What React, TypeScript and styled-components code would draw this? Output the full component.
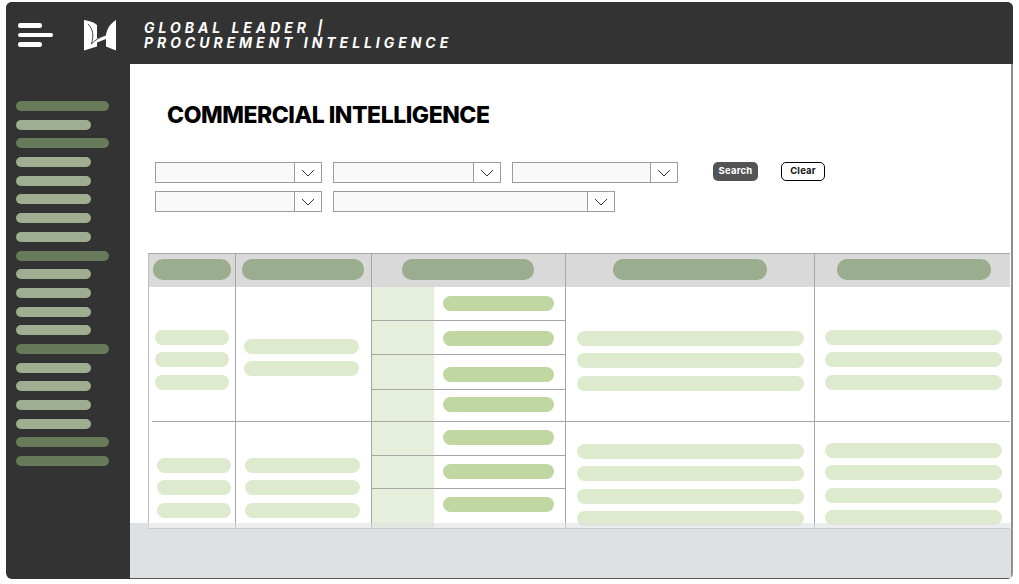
import React from "react";
import styled, { createGlobalStyle } from "styled-components";

const GlobalStyle = createGlobalStyle`
  html, body {
    margin: 0;
    padding: 0;
    background: #fff;
    font-family: "Inter", "Liberation Sans", sans-serif;
  }
  * {
    box-sizing: border-box;
  }
`;

const sideItems = [
  "dark", "light", "dark", "light", "light", "light", "light", "light",
  "dark", "light", "light", "light", "light", "dark", "light", "light",
  "light", "light", "dark", "dark",
];

const rowOneSubs = [
  { height: 34, top: 9 },
  { height: 34, top: 10 },
  { height: 35, top: 12 },
  { height: 31, top: 7 },
];

const rowTwoSubs = [
  { height: 34, top: 8 },
  { height: 33, top: 8 },
  { height: 39, top: 8 },
];

function Logo() {
  return (
    <svg width="32" height="31" viewBox="0 0 32 31">
      <path
        fill="#fff"
        d="M0 0 C5 1 10 2 13 5 L13 18.5 L22 15 C23 8 27 3 32 0 L32 30.5 L22 26.5 L22 19 L13 22.5 L13 26.5 L0 30.5 Z"
      />
      <path
        fill="none"
        stroke="#333"
        strokeWidth="0.9"
        d="M4 4 C9 9 10 15 7.5 24 C11 20 16 17 22 15"
      />
    </svg>
  );
}

function SelectBox({ width }: { width: number }) {
  return (
    <Select $width={width}>
      <SelectInput />
      <SelectArrow>
        <svg width="14" height="8" viewBox="0 0 14 8" fill="none" stroke="#333" strokeWidth="1">
          <path d="M1 1 L7 7 L13 1" />
        </svg>
      </SelectArrow>
    </Select>
  );
}

function Bars({ count, pad }: { count: number; pad: string }) {
  return (
    <BarStack $pad={pad}>
      {Array.from({ length: count }).map((_, i) => (
        <Bar key={i} />
      ))}
    </BarStack>
  );
}

function App() {
  return (
    <>
      <GlobalStyle />
      <Frame>
        <TopBar>
          <Burger>
            <BurgerLine $width={24} />
            <BurgerLine $width={35} />
            <BurgerLine $width={24} />
          </Burger>
          <LogoWrap>
            <Logo />
          </LogoWrap>
          <Tagline>
            GLOBAL LEADER |
            <br />
            PROCUREMENT INTELLIGENCE
          </Tagline>
        </TopBar>
        <Body>
          <Sidebar>
            {sideItems.map((kind, i) => (
              <SideItem key={i} $dark={kind === "dark"} />
            ))}
          </Sidebar>
          <Main>
            <Title>COMMERCIAL INTELLIGENCE</Title>
            <Filters>
              <FilterRow>
                <SelectBox width={167} />
                <SelectBox width={168} />
                <SelectBox width={166} />
                <SearchButton>Search</SearchButton>
                <ClearButton>Clear</ClearButton>
              </FilterRow>
              <FilterRow>
                <SelectBox width={167} />
                <SelectBox width={282} />
              </FilterRow>
            </Filters>
            <Table>
              <HeadRow>
                <HeadCell><HeadPill $width={78} /></HeadCell>
                <HeadCell><HeadPill $width={122} $nudge={2} /></HeadCell>
                <HeadCell><HeadPill $width={132} $nudge={2} /></HeadCell>
                <HeadCell><HeadPill $width={154} /></HeadCell>
                <HeadCell><HeadPill $width={154} /></HeadCell>
              </HeadRow>
              <BodyRow $height={134}>
                <Cell><Bars count={3} pad="43px 6px 0 6px" /></Cell>
                <Cell><Bars count={2} pad="52px 12px 0 8px" /></Cell>
                <SubCell>
                  {rowOneSubs.map((sub, i) => (
                    <SubRow key={i} $height={sub.height} $top={sub.top} />
                  ))}
                </SubCell>
                <Cell><Bars count={3} pad="44px 10px 0 11px" /></Cell>
                <Cell><Bars count={3} pad="43px 8px 0 10px" /></Cell>
              </BodyRow>
              <BodyRow $height={107} $divided>
                <Cell><Bars count={3} pad="36px 4px 0 8px" /></Cell>
                <Cell><Bars count={3} pad="36px 11px 0 9px" /></Cell>
                <SubCell>
                  {rowTwoSubs.map((sub, i) => (
                    <SubRow key={i} $height={sub.height} $top={sub.top} />
                  ))}
                </SubCell>
                <Cell><Bars count={4} pad="22px 10px 0 11px" /></Cell>
                <Cell><Bars count={4} pad="21px 8px 0 10px" /></Cell>
              </BodyRow>
            </Table>
            <Footer />
          </Main>
        </Body>
      </Frame>
    </>
  );
}

const Frame = styled.div`
  width: 1007px;
  height: 577px;
  margin: 2px 6px 0;
  border-radius: 6px;
  overflow: hidden;
  background: #333;
  display: flex;
  flex-direction: column;
`;

const TopBar = styled.header`
  height: 62px;
  display: flex;
  align-items: center;
  background: #333;
  flex-shrink: 0;
`;

const Burger = styled.div`
  width: 66px;
  padding-left: 11.5px;
  display: flex;
  flex-direction: column;
  gap: 4.7px;
  margin-top: 4px;
`;

const BurgerLine = styled.div<{ $width: number }>`
  width: ${(p) => p.$width}px;
  height: 4.6px;
  border-radius: 2.3px;
  background: #fff;
`;

const LogoWrap = styled.div`
  width: 72px;
  padding-left: 12px;
  display: flex;
  margin-top: 5px;
`;

const Tagline = styled.div`
  color: #fff;
  font-size: 14px;
  line-height: 15px;
  font-weight: 700;
  font-style: italic;
  letter-spacing: 3.95px;
  margin-top: 4px;
`;

const Body = styled.div`
  flex: 1;
  display: flex;
  min-height: 0;
`;

const Sidebar = styled.nav`
  width: 124px;
  flex-shrink: 0;
  padding: 37px 0 0 10px;
  display: flex;
  flex-direction: column;
  gap: 8.7px;
`;

const SideItem = styled.div<{ $dark?: boolean }>`
  width: ${(p) => (p.$dark ? 93 : 75)}px;
  height: 10px;
  border-radius: 5px;
  background: ${(p) => (p.$dark ? "#677b5b" : "#9fae90")};
`;

const Main = styled.main`
  flex: 1;
  min-width: 0;
  background: #fff;
  border-right: 2px solid #8f8f8f;
  display: flex;
  flex-direction: column;
`;

const Title = styled.h1`
  margin: 0;
  padding: 37px 0 0 37px;
  height: 98px;
  font-size: 23px;
  line-height: 28px;
  font-weight: 800;
  color: #000;
  letter-spacing: -0.47px;
`;

const Filters = styled.div`
  padding-left: 25px;
  display: flex;
  flex-direction: column;
  gap: 8px;
`;

const FilterRow = styled.div`
  display: flex;
  gap: 11px;
`;

const Select = styled.div<{ $width: number }>`
  width: ${(p) => p.$width}px;
  height: 21px;
  display: flex;
  background: #f9f9f9;
  border: 1px solid #9c9c9c;
`;

const SelectInput = styled.div`
  flex: 1;
  border-right: 1px solid #9c9c9c;
`;

const SelectArrow = styled.div`
  width: 26px;
  background: #fff;
  display: flex;
  align-items: center;
  justify-content: center;
`;

const SearchButton = styled.button`
  width: 45px;
  height: 19px;
  margin-left: 24px;
  padding: 0 0 2px;
  border: none;
  border-radius: 5px;
  background: #545454;
  color: #fff;
  font-family: inherit;
  font-size: 9.5px;
  font-weight: 700;
  letter-spacing: 0.2px;
`;

const ClearButton = styled.button`
  width: 44px;
  height: 19px;
  margin-left: 12px;
  padding: 0 0 2px;
  border: 1px solid #000;
  border-radius: 5px;
  background: #fff;
  color: #111;
  font-family: inherit;
  font-size: 9.5px;
  font-weight: 700;
  letter-spacing: 0.2px;
`;

const Table = styled.div`
  margin: 41px 1px 0 18px;
  border-top: 1px solid #a6a6a6;
  border-left: 1px solid #bdbdbd;
  border-bottom: 1px solid #a6a6a6;
  display: flex;
  flex-direction: column;
`;

const columns = "87px 136px 194px 249px 1fr";

const HeadRow = styled.div`
  display: grid;
  grid-template-columns: ${columns};
  height: 33px;
  background: #d9d9d9;
`;

const HeadCell = styled.div`
  display: flex;
  align-items: center;
  justify-content: center;
  padding-bottom: 2px;
  border-right: 1px solid #a6a6a6;

  &:last-child {
    border-right: none;
    padding-left: 3px;
  }
`;

const HeadPill = styled.div<{ $width: number; $nudge?: number }>`
  width: ${(p) => p.$width}px;
  height: 21px;
  margin-right: ${(p) => p.$nudge ?? 0}px;
  border-radius: 10px;
  background: #9aad8f;
`;

const BodyRow = styled.div<{ $height: number; $divided?: boolean }>`
  display: grid;
  grid-template-columns: ${columns};
  height: ${(p) => p.$height}px;
  ${(p) =>
    p.$divided &&
    `padding-top: 1px;
     background: linear-gradient(#a6a6a6, #a6a6a6) 3px 0 / 100% 1px no-repeat;`}
`;

const Cell = styled.div`
  border-right: 1px solid #a6a6a6;
  min-width: 0;

  &:last-child {
    border-right: none;
  }
`;

const BarStack = styled.div<{ $pad: string }>`
  padding: ${(p) => p.$pad};
  display: flex;
  flex-direction: column;
  gap: 7.4px;
`;

const Bar = styled.div`
  height: 15px;
  border-radius: 7.5px;
  background: #deeacd;
`;

const SubCell = styled.div`
  border-right: 1px solid #a6a6a6;
  display: flex;
  flex-direction: column;
  background: linear-gradient(to right, #e6efdb 62px, transparent 62px);
`;

const SubRow = styled.div<{ $height: number; $top: number }>`
  height: ${(p) => p.$height}px;
  flex-shrink: 0;
  padding: ${(p) => p.$top}px 11px 0 71px;
  border-bottom: 1px solid #a6a6a6;

  &:last-child {
    border-bottom: none;
  }

  &::after {
    content: "";
    display: block;
    height: 15px;
    border-radius: 7.5px;
    background: #c0d7a2;
  }
`;

const Footer = styled.div`
  position: relative;
  flex: 1;
  margin-top: -6px;
  border-bottom: 1px solid #555;
  background:
    linear-gradient(#dee1e4, #dee1e4) 0 0 / 18px 6px no-repeat,
    linear-gradient(rgba(222, 225, 228, 0.6), rgba(222, 225, 228, 0.6)) 18px 0 / 100% 6px no-repeat,
    linear-gradient(#dee1e4, #dee1e4) 0 6px / 100% 100% no-repeat;
`;

export default App;
